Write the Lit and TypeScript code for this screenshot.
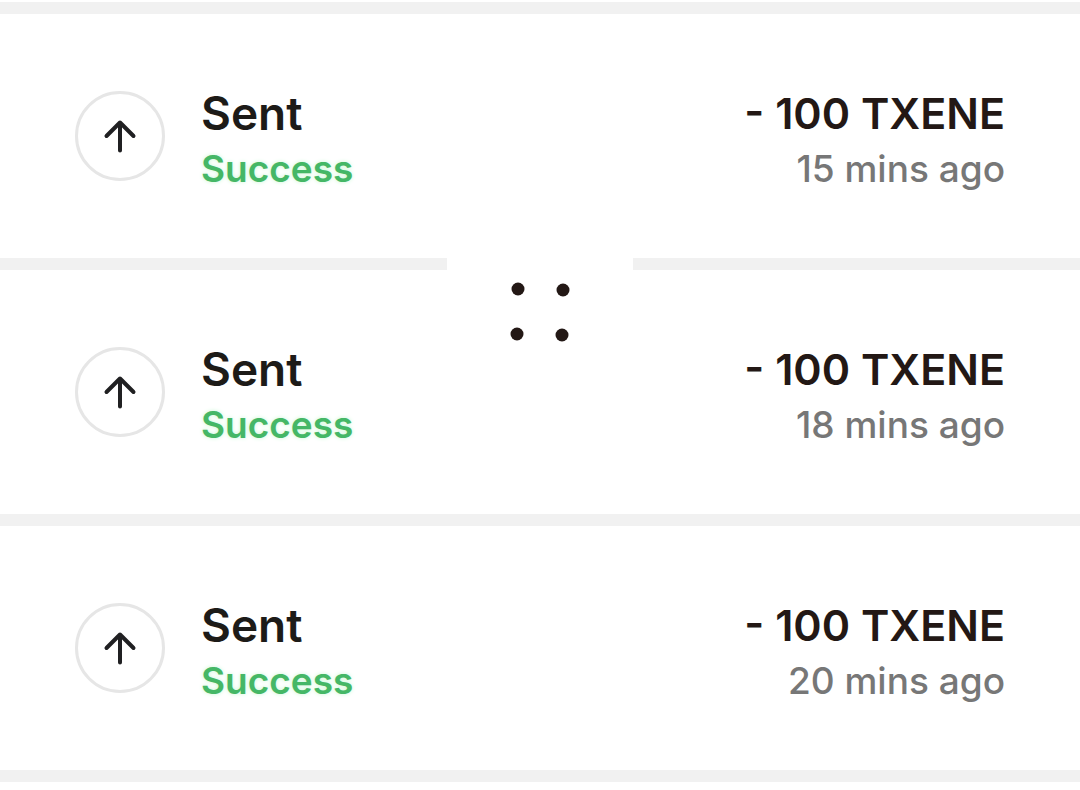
import { LitElement, css, html, svg } from 'lit';
import { customElement, property } from 'lit/decorators.js';

interface Transaction {
  type: string;
  status: string;
  amount: string;
  time: string;
}

@customElement('transaction-row')
export class TransactionRow extends LitElement {
  @property({ type: Object })
  transaction!: Transaction;

  render() {
    const { type, status, amount, time } = this.transaction;
    return html`
      <span class="icon">
        <svg viewBox="0 0 34 34" aria-hidden="true">
          <path d="M17 31.5V3.5M3.5 17L17 3.5L30.5 17" />
        </svg>
      </span>
      <div class="details">
        <span class="title">${type}</span>
        <span class="status">${status}</span>
      </div>
      <div class="details amount">
        <span class="title">${amount}</span>
        <span class="time">${time}</span>
      </div>
    `;
  }

  static styles = css`
    :host {
      display: flex;
      align-items: center;
      gap: 36px;
      padding: 61px 75px;
    }

    .icon {
      display: flex;
      align-items: center;
      justify-content: center;
      flex: none;
      box-sizing: border-box;
      width: 90px;
      height: 90px;
      border: 3px solid #e6e6e6;
      border-radius: 50%;
    }

    .icon svg {
      width: 34px;
      height: 34px;
      fill: none;
      stroke: #202022;
      stroke-width: 4;
      stroke-linecap: round;
      stroke-linejoin: round;
    }

    .details {
      display: flex;
      flex-direction: column;
      flex: 1;
      padding-top: 10px;
      line-height: 56px;
      white-space: nowrap;
    }

    .amount {
      text-align: right;
    }

    .title {
      color: #1d1b18;
      font-size: 46px;
      font-weight: 600;
    }

    .amount .title {
      color: #231815;
      font-size: 43px;
    }

    .status {
      color: #45b766;
      font-size: 37px;
      font-weight: 600;
      text-shadow: 0 0 4px #c8f7d4;
    }

    .time {
      color: #777;
      font-size: 37px;
      font-weight: 500;
    }
  `;
}

@customElement('app-root')
export class AppRoot extends LitElement {
  private transactions: Transaction[] = [
    { type: 'Sent', status: 'Success', amount: '- 100 TXENE', time: '15 mins ago' },
    { type: 'Sent', status: 'Success', amount: '- 100 TXENE', time: '18 mins ago' },
    { type: 'Sent', status: 'Success', amount: '- 100 TXENE', time: '20 mins ago' },
  ];

  private dots = [
    [71, 31],
    [116, 32],
    [70, 76],
    [115, 77],
  ];

  render() {
    return html`
      <ul class="list">
        ${this.transactions.map(
          (transaction) => html`
            <li class="item">
              <transaction-row .transaction=${transaction}></transaction-row>
            </li>
          `
        )}
      </ul>
      <svg class="handle" viewBox="0 0 186 90" aria-hidden="true">
        ${this.dots.map(([x, y]) => svg`<circle cx=${x} cy=${y} r="6.5" />`)}
      </svg>
    `;
  }

  static styles = css`
    :host {
      display: block;
      position: relative;
      background: #fff;
      font-family: Inter, 'Liberation Sans', sans-serif;
    }

    .list {
      margin: 0;
      padding: 2px 0 0;
      list-style: none;
    }

    .item {
      border-bottom: 12px solid #f1f1f1;
    }

    .item:first-child {
      border-top: 12px solid #f1f1f1;
    }

    /* Sits over the first divider and leaves a gap in it. */
    .handle {
      position: absolute;
      top: 258px;
      left: 50%;
      width: 186px;
      height: 90px;
      margin-left: -93px;
      background: #fff;
      fill: #231815;
    }
  `;
}

declare global {
  interface HTMLElementTagNameMap {
    'transaction-row': TransactionRow;
    'app-root': AppRoot;
  }
}
